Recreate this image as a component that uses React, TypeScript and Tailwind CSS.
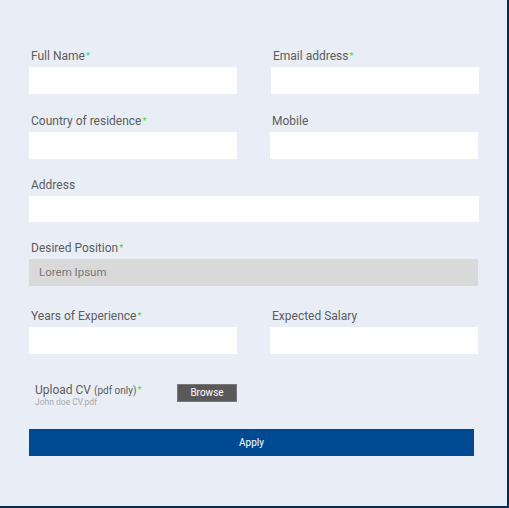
import React from 'react';

const Star = () => <span className="text-[9px] text-[#22e522] align-[1px] ml-[1px]">*</span>;

const Field = ({ label, required, gray, value, h = 'h-[27px]' }: { label: string; required?: boolean; gray?: boolean; value?: string; h?: string }) => (
  <div className="flex flex-col">
    <div className="h-[16px] leading-[16px] text-[12px] text-[#5c5c5c] pl-[2px]">
      {label}
      {required && <Star />}
    </div>
    <div className={`mt-[3px] ${h} ${gray ? 'bg-[#d9d9d9]' : 'bg-white'} flex items-center pl-[10px] text-[11.5px] text-[#777]`}>
      {value}
    </div>
  </div>
);

const App = () => {
  return (
    <div className="w-[509px] h-[508px] bg-[#e9eef6] border-r-2 border-b-2 border-[#0b2a4f] font-['Roboto',sans-serif]">
      <div className="pl-[29px] pt-[48px] w-[479px]">
        <div className="grid grid-cols-2 gap-x-[34px]">
          <Field label="Full Name" required />
          <Field label="Email address" required />
        </div>
        <div className="grid grid-cols-2 gap-x-[33px] mt-[19px] w-[449px]">
          <Field label="Country of residence" required />
          <Field label="Mobile" />
        </div>
        <div className="mt-[18px]">
          <Field label="Address" h="h-[26px]" />
        </div>
        <div className="mt-[18px] w-[449px]">
          <Field label="Desired Position" required gray value="Lorem Ipsum" />
        </div>
        <div className="grid grid-cols-2 gap-x-[33px] mt-[22px] w-[449px]">
          <Field label="Years of Experience" required />
          <Field label="Expected Salary" />
        </div>

        <div className="flex items-start mt-[27px]">
          <div className="pl-[6px] pt-[2px] w-[148px]">
            <div className="h-[14px] leading-[14px] text-[12px] text-[#5c5c5c]">
              Upload CV <span className="text-[10px]">(pdf only)</span>
              <Star />
            </div>
            <div className="text-[8.5px] leading-[10px] text-[#aaa]">John doe CV.pdf</div>
          </div>
          <button className="mt-[3px] w-[60px] h-[18px] bg-[#595959] border border-[#777] text-white text-[10px] leading-none">
            Browse
          </button>
        </div>

        <button className="mt-[22px] w-[445px] h-[27px] bg-[#004a93] text-white text-[10px] flex items-center justify-center">
          Apply
        </button>
      </div>
    </div>
  );
};

export default App;
